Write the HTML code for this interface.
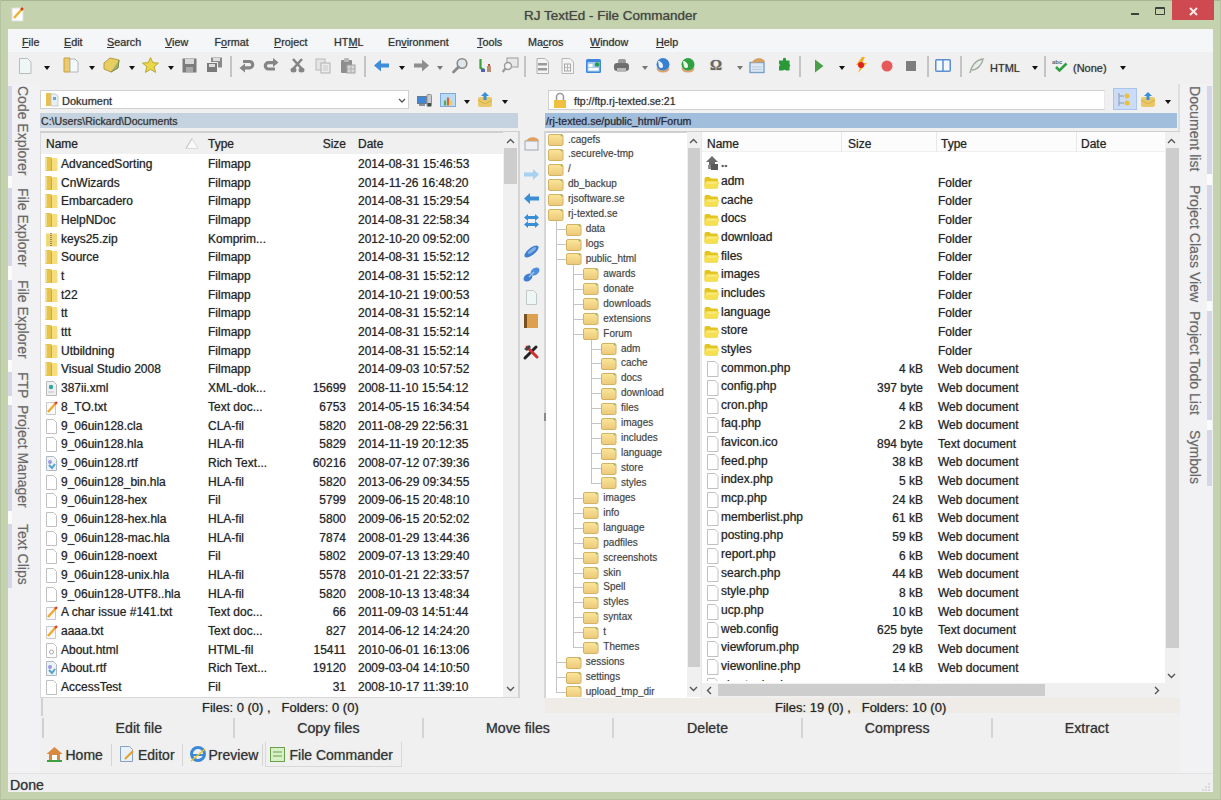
<!DOCTYPE html><html><head><meta charset="utf-8"><style>
*{margin:0;padding:0;box-sizing:border-box}
html,body{width:1221px;height:800px;overflow:hidden;background:#c4d2ad;font-family:"Liberation Sans", sans-serif;color:#262626}
.ab{position:absolute}
.t{position:absolute;white-space:nowrap;font-size:12px;line-height:14px;text-shadow:0 0 1px rgba(30,30,30,0.55)}
.s{position:absolute;white-space:nowrap;font-size:10px;line-height:12px;text-shadow:0 0 1px rgba(40,40,40,0.35)}
svg{position:absolute;overflow:visible}
.dd{position:absolute;width:0;height:0;border-left:3.5px solid transparent;border-right:3.5px solid transparent;border-top:4px solid #111}
.vt{position:absolute;white-space:nowrap;font-size:14px;line-height:14px;transform-origin:0 0;transform:rotate(90deg);color:#686868;text-shadow:0 0 1px rgba(80,80,80,0.35)}
</style></head><body><div id="root" style="position:absolute;left:0;top:0;width:1221px;height:800px">

<div class="ab" style="left:0;top:0;width:1221px;height:1px;background:#a9b794"></div>
<div class="ab" style="left:0;top:0;width:1px;height:800px;background:#b5c3a0"></div>
<div class="ab" style="left:1220px;top:0;width:1px;height:800px;background:#b5c3a0"></div>
<div class="ab" style="left:0;top:799px;width:1221px;height:1px;background:#b5c3a0"></div>
<div class="t" style="left:0;top:8px;width:1221px;text-align:center;font-size:13.5px;line-height:16px;color:#454545;padding-left:0px">RJ TextEd - File Commander</div>
<svg style="left:11px;top:6px" width="14" height="16" viewBox="0 0 14 16"><rect x="1" y="2" width="11" height="13" fill="#fff" stroke="#ddd"/><path d="M3 12 L11 3" stroke="#f0b030" stroke-width="2.5"/><path d="M10 4 L12 2" stroke="#d04020" stroke-width="2.5"/></svg>
<div class="ab" style="left:1131px;top:12.5px;width:8px;height:2px;background:#3a423a"></div>
<div class="ab" style="left:1155px;top:7px;width:10px;height:8px;border:1.5px solid #3a423a;border-top-width:2.5px;border-radius:1px"></div>
<div class="ab" style="left:1172px;top:0px;width:42px;height:20px;background:#cf4a50"></div>
<svg style="left:1189px;top:7px" width="9" height="9" viewBox="0 0 9 9"><path d="M1 1L8 8M8 1L1 8" stroke="#fbe8e8" stroke-width="2"/></svg>
<div class="ab" style="left:8px;top:29px;width:1205px;height:763px;background:#f0f0f0"></div>
<div class="ab" style="left:8px;top:29px;width:1205px;height:23px;background:#f5f6f7"></div>
<div class="t" style="left:22px;top:35px;font-size:10.8px;color:#333"><u style="text-decoration-thickness:1px;text-underline-offset:1px">F</u>ile</div>
<div class="t" style="left:64px;top:35px;font-size:10.8px;color:#333"><u style="text-decoration-thickness:1px;text-underline-offset:1px">E</u>dit</div>
<div class="t" style="left:107px;top:35px;font-size:10.8px;color:#333"><u style="text-decoration-thickness:1px;text-underline-offset:1px">S</u>earch</div>
<div class="t" style="left:165px;top:35px;font-size:10.8px;color:#333"><u style="text-decoration-thickness:1px;text-underline-offset:1px">V</u>iew</div>
<div class="t" style="left:214.5px;top:35px;font-size:10.8px;color:#333">F<u style="text-decoration-thickness:1px;text-underline-offset:1px">o</u>rmat</div>
<div class="t" style="left:274px;top:35px;font-size:10.8px;color:#333"><u style="text-decoration-thickness:1px;text-underline-offset:1px">P</u>roject</div>
<div class="t" style="left:334px;top:35px;font-size:10.8px;color:#333">HT<u style="text-decoration-thickness:1px;text-underline-offset:1px">M</u>L</div>
<div class="t" style="left:388px;top:35px;font-size:10.8px;color:#333">En<u style="text-decoration-thickness:1px;text-underline-offset:1px">v</u>ironment</div>
<div class="t" style="left:477px;top:35px;font-size:10.8px;color:#333"><u style="text-decoration-thickness:1px;text-underline-offset:1px">T</u>ools</div>
<div class="t" style="left:528px;top:35px;font-size:10.8px;color:#333">Ma<u style="text-decoration-thickness:1px;text-underline-offset:1px">c</u>ros</div>
<div class="t" style="left:590px;top:35px;font-size:10.8px;color:#333"><u style="text-decoration-thickness:1px;text-underline-offset:1px">W</u>indow</div>
<div class="t" style="left:656px;top:35px;font-size:10.8px;color:#333"><u style="text-decoration-thickness:1px;text-underline-offset:1px">H</u>elp</div>
<svg style="left:18px;top:58px" width="14" height="16" viewBox="0 0 14 16"><path d="M1.5 .5h8l3.5 3.5v11.5h-11.5z" fill="#eef6f6" stroke="#b8bcbc"/></svg>
<div class="dd" style="left:43.5px;top:66px"></div>
<svg style="left:63px;top:57px" width="16" height="16" viewBox="0 0 16 16"><path d="M1 1h6v14h-6z" fill="#eccb6a" stroke="#c9a040"/><path d="M7 2h5l3 3v10h-8z" fill="#f4fafa" stroke="#b0b8b8"/></svg>
<div class="dd" style="left:88.5px;top:66px"></div>
<svg style="left:103px;top:57px" width="17" height="16" viewBox="0 0 17 16"><path d="M1 6l6-5 9 2-1 8-7 4-7-3z" fill="#e8cd60" stroke="#b89a40"/><path d="M8 15l7-4 1-8" fill="#9cb070" stroke="#7a9050"/></svg>
<div class="dd" style="left:128.5px;top:66px"></div>
<svg style="left:142px;top:57px" width="17" height="16" viewBox="0 0 17 16"><path d="M8.5 .5l2.3 5.2 5.7.4-4.4 3.7 1.5 5.6-5.1-3-5.1 3 1.5-5.6-4.4-3.7 5.7-.4z" fill="#e8d848" stroke="#b8a830"/></svg>
<div class="dd" style="left:167.5px;top:66px"></div>
<svg style="left:182px;top:58px" width="15" height="15" viewBox="0 0 15 15"><path d="M.5 .5h14v14h-14z" fill="#7c7c7c"/><rect x="3" y="1" width="9" height="5" fill="#d8d8d8"/><rect x="4" y="9" width="7" height="5" fill="#a8a8a8"/></svg>
<svg style="left:206px;top:57px" width="17" height="16" viewBox="0 0 17 16"><path d="M5 .5h11v10h-11z" fill="#8a8a8a"/><rect x="7" y="1" width="7" height="3" fill="#ddd"/><path d="M.5 5.5h11v10h-11z" fill="#7a7a7a" stroke="#eee"/><rect x="3" y="7" width="6" height="3" fill="#ddd"/></svg>
<div class="ab" style="left:230px;top:56px;width:1.5px;height:21px;background:#c4c4c4"></div>
<svg style="left:239px;top:58px" width="16" height="15" viewBox="0 0 16 15"><path d="M4 3.5h6.5a3.2 3.2 0 0 1 0 6.4h-5" fill="none" stroke="#858585" stroke-width="3.2"/><path d="M0.5 10l5.5-4.5v9z" fill="#858585"/></svg>
<svg style="left:263px;top:58px" width="16" height="15" viewBox="0 0 16 15"><path d="M12 11h-6.5a3.2 3.2 0 0 1 0-6.4h5" fill="none" stroke="#858585" stroke-width="3.2"/><path d="M15.5 4.6l-5.5-4.5v9z" fill="#858585"/></svg>
<svg style="left:290px;top:58px" width="15" height="15" viewBox="0 0 15 15"><path d="M3 1l9 10M12 1l-9 10" stroke="#858585" stroke-width="2.6"/><ellipse cx="3.5" cy="12" rx="3" ry="2.5" fill="#858585"/><ellipse cx="11.5" cy="12" rx="3" ry="2.5" fill="#858585"/></svg>
<svg style="left:315px;top:58px" width="16" height="16" viewBox="0 0 16 16"><rect x="1" y="1" width="9" height="11" fill="#e4e4e4" stroke="#b8b8b8"/><rect x="6" y="5" width="9" height="10" fill="#ececec" stroke="#b0b0b0"/><path d="M8 8h5M8 10h5M8 12h5" stroke="#c8c8c8"/></svg>
<svg style="left:340px;top:57px" width="16" height="17" viewBox="0 0 16 17"><rect x="1" y="3" width="11" height="13" rx="1" fill="#8e8e8e"/><rect x="4" y="1" width="5" height="4" rx="1" fill="#b8b8b8"/><rect x="7" y="8" width="8" height="8" fill="#d8d8d8" stroke="#a0a0a0"/><path d="M11 8v8M7 12h8" stroke="#b0b0b0"/></svg>
<div class="ab" style="left:364px;top:56px;width:1.5px;height:21px;background:#c4c4c4"></div>
<svg style="left:374px;top:59px" width="16" height="13" viewBox="0 0 16 13"><path d="M0 6.5l7-6v4h8v4h-8v4z" fill="#3c8ed8"/></svg>
<div class="dd" style="left:398.5px;top:66px"></div>
<svg style="left:413px;top:59px" width="16" height="13" viewBox="0 0 16 13"><path d="M16 6.5l-7-6v4h-8v4h8v4z" fill="#8e8e8e"/></svg>
<div class="dd" style="left:436.5px;top:66px;border-top-color:#777"></div>
<svg style="left:452px;top:57px" width="16" height="16" viewBox="0 0 16 16"><circle cx="10" cy="6.5" r="4.8" fill="#dfe6ee" stroke="#8a8a8a" stroke-width="1.6"/><path d="M6.5 10l-5 5" stroke="#8a8a8a" stroke-width="2.8" stroke-linecap="round"/></svg>
<svg style="left:478px;top:58px" width="15" height="16" viewBox="0 0 15 16"><path d="M2.5 1v9l4 2" stroke="#3aa040" stroke-width="2.2" fill="none"/><path d="M9 8h4v6h-4z" fill="#b89070"/><rect x="10" y="6" width="2" height="2" fill="#c05030"/><rect x="3" y="11" width="4" height="3" fill="#5060c0"/></svg>
<svg style="left:502px;top:57px" width="16" height="16" viewBox="0 0 16 16"><rect x="5" y="1" width="11" height="9" fill="#e8e8e8" stroke="#9a9a9a"/><circle cx="6" cy="9" r="3.5" fill="#f4f4f4" stroke="#9a9a9a" stroke-width="1.4"/><path d="M3.5 11.5l-3 3.5" stroke="#9a9a9a" stroke-width="2.2"/></svg>
<div class="ab" style="left:524px;top:56px;width:1.5px;height:21px;background:#c4c4c4"></div>
<svg style="left:536px;top:58px" width="13" height="16" viewBox="0 0 13 16"><path d="M1 .5h8l3.5 3.5v11.5h-11.5z" fill="#f4f4f4" stroke="#b0b0b0"/><rect x="2" y="5" width="9" height="2.5" fill="#9a9a9a"/><rect x="2" y="10" width="9" height="2.5" fill="#9a9a9a"/></svg>
<svg style="left:561px;top:58px" width="13" height="16" viewBox="0 0 13 16"><path d="M1 .5h8l3.5 3.5v11.5h-11.5z" fill="#f4f4f4" stroke="#b8b8b8"/><rect x="3.5" y="6" width="6" height="7" fill="none" stroke="#a8a8a8"/><path d="M6.5 6v7M3.5 9.5h6" stroke="#b8b8b8"/></svg>
<svg style="left:586px;top:59px" width="15" height="14" viewBox="0 0 15 14"><rect x="0" y="0" width="15" height="14" rx="1.5" fill="#3f86dc"/><rect x="1.5" y="3" width="12" height="9.5" fill="#a8ccf0"/><rect x="2.5" y="5" width="4" height="3" fill="#fff"/><rect x="2.5" y="9" width="10" height="2.5" fill="#fff"/><circle cx="11" cy="5.5" r="2.2" fill="#20a040"/></svg>
<svg style="left:613px;top:58px" width="17" height="15" viewBox="0 0 17 15"><rect x="5" y="1" width="8" height="5" rx="2" fill="#9a9a9a"/><rect x="1" y="5" width="15" height="8" rx="3" fill="#6e6e6e"/><rect x="4" y="10" width="9" height="4" fill="#b8b8b8"/></svg>
<div class="dd" style="left:641.5px;top:66px;border-top-color:#777"></div>
<svg style="left:655px;top:57px" width="16" height="16" viewBox="0 0 16 16"><circle cx="8" cy="7.5" r="6.5" fill="#3a80d0"/><path d="M3 4c2 0 5 2 5 5s-3 2-4 1" fill="#e8f2fc"/><path d="M1.5 10.5q6.5 6 13 0q0 5-6.5 5t-6.5-5z" fill="#d8a470"/></svg>
<svg style="left:680px;top:57px" width="16" height="16" viewBox="0 0 16 16"><circle cx="8" cy="7.5" r="6.5" fill="#30a040"/><path d="M3 4c2 0 5 2 5 5s-3 2-4 1" fill="#e8fce8"/><path d="M1.5 10.5q6.5 6 13 0q0 5-6.5 5t-6.5-5z" fill="#d8a470"/></svg>
<div class="t" style="left:710px;top:57px;font-family:&quot;Liberation Serif&quot;,serif;font-weight:bold;font-size:15px;line-height:16px;color:#666">&#937;</div>
<div class="dd" style="left:736.5px;top:66px;border-top-color:#777"></div>
<svg style="left:749px;top:57px" width="17" height="16" viewBox="0 0 17 16"><rect x="1" y="5.5" width="14" height="10" fill="#dde8f4" stroke="#7aa0c8" stroke-width="1.4"/><path d="M3 6c1-5 9-6 12-3l1 2z" fill="#d8a060"/><path d="M3 10h10M3 12.5h10" stroke="#b8cce0"/></svg>
<svg style="left:776px;top:57px" width="16" height="16" viewBox="0 0 16 16"><path d="M7 1.5a2 2 0 0 1 3 0v2h3.5v3.5a2 2 0 0 1 0 3v3.5h-3.5a2 2 0 0 0-3 0h-4v-4a2 2 0 0 0 0-3v-3h4z" fill="#2a9a38"/></svg>
<div class="ab" style="left:799px;top:56px;width:1.5px;height:21px;background:#c4c4c4"></div>
<svg style="left:815px;top:59px" width="9" height="14" viewBox="0 0 9 14"><path d="M0 0.5v13l8.5-6.5z" fill="#4aa048"/></svg>
<div class="dd" style="left:838.5px;top:66px"></div>
<svg style="left:853px;top:57px" width="16" height="16" viewBox="0 0 16 16"><path d="M9 0l-6 8h5l-3 8 9-10h-5l3-6z" fill="#f0b020"/><circle cx="8" cy="8" r="3" fill="#e02020"/></svg>
<svg style="left:881px;top:60px" width="12" height="12" viewBox="0 0 12 12"><circle cx="6" cy="6" r="5.5" fill="#e65a5a"/></svg>
<svg style="left:906px;top:61px" width="10" height="10" viewBox="0 0 10 10"><rect width="10" height="10" fill="#7e7e7e"/></svg>
<div class="ab" style="left:927px;top:56px;width:1.5px;height:21px;background:#c4c4c4"></div>
<svg style="left:935px;top:59px" width="16" height="13" viewBox="0 0 16 13"><rect x=".75" y=".75" width="14.5" height="11.5" rx="1" fill="#f4f8fc" stroke="#5a90d0" stroke-width="1.5"/><path d="M8 1v11" stroke="#5a90d0" stroke-width="1.5"/></svg>
<div class="ab" style="left:960px;top:56px;width:1.5px;height:21px;background:#c4c4c4"></div>
<svg style="left:968px;top:58px" width="16" height="16" viewBox="0 0 16 16"><path d="M2 15c1-6 5-13 13-14-1 6-6 11-11 11" fill="#e8eee8" stroke="#a0aaa0" stroke-width="1.5"/></svg>
<div class="t" style="left:990px;top:61px;font-size:11px;color:#333">HTML</div>
<div class="dd" style="left:1031.5px;top:66px"></div>
<div class="ab" style="left:1044px;top:56px;width:1.5px;height:21px;background:#c4c4c4"></div>
<svg style="left:1052px;top:57px" width="16" height="16" viewBox="0 0 16 16"><path d="M4 10l3.5 3.5 7-7" stroke="#30a040" stroke-width="2.5" fill="none"/><text x="0" y="6.5" font-size="6" font-weight="bold" fill="#666" font-family="Liberation Sans">abc</text></svg>
<div class="t" style="left:1073px;top:61px;font-size:11px;color:#333">(None)</div>
<div class="dd" style="left:1119.5px;top:66px"></div>
<div class="ab" style="left:1180px;top:84px;width:33px;height:689px;background:#f2f2f4"></div>
<div class="ab" style="left:8px;top:84px;width:32px;height:689px;background:#f2f2f4"></div>
<div class="ab" style="left:8px;top:86px;width:4px;height:90px;background:#d5d7e7"></div>
<div class="vt" style="left:30px;top:86px">Code Explorer</div>
<div class="ab" style="left:8px;top:188px;width:4px;height:78px;background:#d5d7e7"></div>
<div class="vt" style="left:30px;top:188px">File Explorer</div>
<div class="ab" style="left:8px;top:280px;width:4px;height:80px;background:#d5d7e7"></div>
<div class="vt" style="left:30px;top:280px">File Explorer</div>
<div class="ab" style="left:8px;top:372px;width:4px;height:24px;background:#d5d7e7"></div>
<div class="vt" style="left:30px;top:372px">FTP</div>
<div class="ab" style="left:8px;top:405px;width:4px;height:106px;background:#d5d7e7"></div>
<div class="vt" style="left:30px;top:405px">Project Manager</div>
<div class="ab" style="left:8px;top:524px;width:4px;height:64px;background:#d5d7e7"></div>
<div class="vt" style="left:30px;top:524px">Text Clips</div>
<div class="ab" style="left:8px;top:176px;width:4px;height:12px;background:#fbfbfb"></div>
<div class="ab" style="left:8px;top:266px;width:4px;height:14px;background:#fbfbfb"></div>
<div class="ab" style="left:8px;top:360px;width:4px;height:12px;background:#fbfbfb"></div>
<div class="ab" style="left:8px;top:396px;width:4px;height:9px;background:#fbfbfb"></div>
<div class="ab" style="left:8px;top:511px;width:4px;height:13px;background:#fbfbfb"></div>
<div class="ab" style="left:1207px;top:86px;width:5px;height:88px;background:#d5d7e7"></div>
<div class="vt" style="left:1202px;top:86px;font-size:14.1px">Document list</div>
<div class="ab" style="left:1207px;top:185px;width:5px;height:116px;background:#d5d7e7"></div>
<div class="vt" style="left:1202px;top:185px;font-size:14.1px">Project Class View</div>
<div class="ab" style="left:1207px;top:311px;width:5px;height:109px;background:#d5d7e7"></div>
<div class="vt" style="left:1202px;top:311px;font-size:14.1px">Project Todo List</div>
<div class="ab" style="left:1207px;top:430px;width:5px;height:56px;background:#d5d7e7"></div>
<div class="vt" style="left:1202px;top:430px;font-size:14.1px">Symbols</div>
<div class="ab" style="left:1207px;top:174px;width:5px;height:11px;background:#fbfbfb"></div>
<div class="ab" style="left:1207px;top:301px;width:5px;height:10px;background:#fbfbfb"></div>
<div class="ab" style="left:1207px;top:420px;width:5px;height:10px;background:#fbfbfb"></div>
<div class="ab" style="left:40px;top:90px;width:369px;height:19px;background:#fff;border:1px solid #d0d0d0"></div>
<svg style="left:45px;top:92px" width="13" height="15" viewBox="0 0 13 15"><path d="M1 1h5v13h-5z" fill="#e8c050"/><path d="M6 2h5l2 2v10h-7z" fill="#e8f0f4" stroke="#b8c0c8" stroke-width=".8"/><rect x="8" y="5" width="3" height="3" fill="#60a8e0"/></svg>
<div class="t" style="left:62px;top:94px;font-size:11px;color:#333">Dokument</div>
<svg style="left:398px;top:98px" width="8" height="5" viewBox="0 0 8 5"><path d="M1 1l3 3 3-3" stroke="#555" stroke-width="1.3" fill="none"/></svg>
<svg style="left:417px;top:94px" width="15" height="13" viewBox="0 0 15 13"><rect x="0.5" y="2.5" width="9" height="7" fill="#3f88d8" stroke="#6a7a8a"/><rect x="10" y="0.5" width="4.5" height="12" rx="1" fill="#c8ccd0" stroke="#8a9098"/><rect x="2" y="10" width="6" height="2" fill="#8a9098"/><rect x="10.5" y="9" width="3.5" height="3" fill="#405040"/></svg>
<svg style="left:440px;top:93px" width="16" height="14" viewBox="0 0 16 14"><rect x=".5" y=".5" width="15" height="13" fill="#b8dcf4" stroke="#80a8d8"/><path d="M5 12.5v-5" stroke="#50b050" stroke-width="2.2"/><path d="M8 12.5v-8" stroke="#e06040" stroke-width="2.2"/><path d="M11 12.5v-5" stroke="#f0d050" stroke-width="2.2"/></svg>
<div class="dd" style="left:463.5px;top:100px"></div>
<svg style="left:477px;top:92px" width="16" height="15" viewBox="0 0 16 15"><path d="M1 7q0-2 2-2h10q2 0 2 2v6q0 2-2 2h-10q-2 0-2-2z" fill="#e8c868"/><path d="M1 8l7 4 7-4" fill="none" stroke="#d0a840" stroke-width=".8"/><path d="M8 0l-4 4h2.5v4h3v-4h2.5z" fill="#3a90d8"/></svg>
<div class="dd" style="left:501.5px;top:100px"></div>
<div class="ab" style="left:40px;top:113px;width:478px;height:15px;background:#c5d3e1"></div>
<div class="t" style="left:41px;top:114.5px;font-size:10.6px;line-height:13px;color:#333">C:\Users\Rickard\Documents</div>
<div class="ab" style="left:40px;top:131px;width:480px;height:567px;background:#fff;border:1px solid #d8d8d8;border-top:2px solid #cfcfcf;border-right:2px solid #d4d4d4"></div>
<div class="ab" style="left:41px;top:133px;width:462px;height:21px;background:#f0f0f0"></div>
<svg style="left:185px;top:138px" width="14" height="11" viewBox="0 0 14 11"><path d="M1 10.5l6-10 6 10z" fill="#fafafa" stroke="#dadada"/><path d="M1 10.5l6-10" stroke="#c4c4c4"/></svg>
<div class="t" style="left:46px;top:137px">Name</div>
<div class="t" style="left:208px;top:137px">Type</div>
<div class="t" style="left:358px;top:137px">Date</div>
<div class="t" style="left:286px;top:137px;width:60px;text-align:right">Size</div>
<div class="ab" style="left:503px;top:132px;width:15px;height:565px;background:#f0f0f0"></div>
<div class="ab" style="left:504px;top:148px;width:13px;height:36px;background:#cdcdcd"></div>
<svg style="left:506px;top:138px" width="9" height="6" viewBox="0 0 9 6"><path d="M1 5l3.5-3.5 3.5 3.5" stroke="#555" stroke-width="1.4" fill="none"/></svg>
<svg style="left:506px;top:686px" width="9" height="6" viewBox="0 0 9 6"><path d="M1 1l3.5 3.5 3.5-3.5" stroke="#555" stroke-width="1.4" fill="none"/></svg>
<svg style="left:45px;top:156px" width="13" height="16" viewBox="0 0 13 16"><path d="M0.5 1h5.5l1 1v13h-6.5z" fill="#e6c24e"/><path d="M6 2h5.5l1 1v12h-6.5z" fill="#f6de7c"/><path d="M6.5 2.5v12.5" stroke="#d4a834" stroke-width="1"/><path d="M1.5 2v12" stroke="#f4e090" stroke-width="1"/></svg>
<div class="t" style="left:61px;top:157.00px">AdvancedSorting</div>
<div class="t" style="left:208px;top:157.00px">Filmapp</div>
<div class="t" style="left:358px;top:157.00px">2014-08-31 15:46:53</div>
<svg style="left:45px;top:175px" width="13" height="16" viewBox="0 0 13 16"><path d="M0.5 1h5.5l1 1v13h-6.5z" fill="#e6c24e"/><path d="M6 2h5.5l1 1v12h-6.5z" fill="#f6de7c"/><path d="M6.5 2.5v12.5" stroke="#d4a834" stroke-width="1"/><path d="M1.5 2v12" stroke="#f4e090" stroke-width="1"/></svg>
<div class="t" style="left:61px;top:175.68px">CnWizards</div>
<div class="t" style="left:208px;top:175.68px">Filmapp</div>
<div class="t" style="left:358px;top:175.68px">2014-11-26 16:48:20</div>
<svg style="left:45px;top:193px" width="13" height="16" viewBox="0 0 13 16"><path d="M0.5 1h5.5l1 1v13h-6.5z" fill="#e6c24e"/><path d="M6 2h5.5l1 1v12h-6.5z" fill="#f6de7c"/><path d="M6.5 2.5v12.5" stroke="#d4a834" stroke-width="1"/><path d="M1.5 2v12" stroke="#f4e090" stroke-width="1"/></svg>
<div class="t" style="left:61px;top:194.36px">Embarcadero</div>
<div class="t" style="left:208px;top:194.36px">Filmapp</div>
<div class="t" style="left:358px;top:194.36px">2014-08-31 15:29:54</div>
<svg style="left:45px;top:212px" width="13" height="16" viewBox="0 0 13 16"><path d="M0.5 1h5.5l1 1v13h-6.5z" fill="#e6c24e"/><path d="M6 2h5.5l1 1v12h-6.5z" fill="#f6de7c"/><path d="M6.5 2.5v12.5" stroke="#d4a834" stroke-width="1"/><path d="M1.5 2v12" stroke="#f4e090" stroke-width="1"/></svg>
<div class="t" style="left:61px;top:213.04px">HelpNDoc</div>
<div class="t" style="left:208px;top:213.04px">Filmapp</div>
<div class="t" style="left:358px;top:213.04px">2014-08-31 22:58:34</div>
<svg style="left:45px;top:232px" width="13" height="15" viewBox="0 0 13 15"><path d="M1 1.5h11v13h-11z" fill="#f0d878"/><path d="M6 1v14" stroke="#555" stroke-width="1.2" stroke-dasharray="1 1"/></svg>
<div class="t" style="left:61px;top:231.72px">keys25.zip</div>
<div class="t" style="left:208px;top:231.72px">Komprim...</div>
<div class="t" style="left:358px;top:231.72px">2012-10-20 09:52:00</div>
<svg style="left:45px;top:249px" width="13" height="16" viewBox="0 0 13 16"><path d="M0.5 1h5.5l1 1v13h-6.5z" fill="#e6c24e"/><path d="M6 2h5.5l1 1v12h-6.5z" fill="#f6de7c"/><path d="M6.5 2.5v12.5" stroke="#d4a834" stroke-width="1"/><path d="M1.5 2v12" stroke="#f4e090" stroke-width="1"/></svg>
<div class="t" style="left:61px;top:250.40px">Source</div>
<div class="t" style="left:208px;top:250.40px">Filmapp</div>
<div class="t" style="left:358px;top:250.40px">2014-08-31 15:52:12</div>
<svg style="left:45px;top:268px" width="13" height="16" viewBox="0 0 13 16"><path d="M0.5 1h5.5l1 1v13h-6.5z" fill="#e6c24e"/><path d="M6 2h5.5l1 1v12h-6.5z" fill="#f6de7c"/><path d="M6.5 2.5v12.5" stroke="#d4a834" stroke-width="1"/><path d="M1.5 2v12" stroke="#f4e090" stroke-width="1"/></svg>
<div class="t" style="left:61px;top:269.08px">t</div>
<div class="t" style="left:208px;top:269.08px">Filmapp</div>
<div class="t" style="left:358px;top:269.08px">2014-08-31 15:52:12</div>
<svg style="left:45px;top:287px" width="13" height="16" viewBox="0 0 13 16"><path d="M0.5 1h5.5l1 1v13h-6.5z" fill="#e6c24e"/><path d="M6 2h5.5l1 1v12h-6.5z" fill="#f6de7c"/><path d="M6.5 2.5v12.5" stroke="#d4a834" stroke-width="1"/><path d="M1.5 2v12" stroke="#f4e090" stroke-width="1"/></svg>
<div class="t" style="left:61px;top:287.76px">t22</div>
<div class="t" style="left:208px;top:287.76px">Filmapp</div>
<div class="t" style="left:358px;top:287.76px">2014-10-21 19:00:53</div>
<svg style="left:45px;top:305px" width="13" height="16" viewBox="0 0 13 16"><path d="M0.5 1h5.5l1 1v13h-6.5z" fill="#e6c24e"/><path d="M6 2h5.5l1 1v12h-6.5z" fill="#f6de7c"/><path d="M6.5 2.5v12.5" stroke="#d4a834" stroke-width="1"/><path d="M1.5 2v12" stroke="#f4e090" stroke-width="1"/></svg>
<div class="t" style="left:61px;top:306.44px">tt</div>
<div class="t" style="left:208px;top:306.44px">Filmapp</div>
<div class="t" style="left:358px;top:306.44px">2014-08-31 15:52:14</div>
<svg style="left:45px;top:324px" width="13" height="16" viewBox="0 0 13 16"><path d="M0.5 1h5.5l1 1v13h-6.5z" fill="#e6c24e"/><path d="M6 2h5.5l1 1v12h-6.5z" fill="#f6de7c"/><path d="M6.5 2.5v12.5" stroke="#d4a834" stroke-width="1"/><path d="M1.5 2v12" stroke="#f4e090" stroke-width="1"/></svg>
<div class="t" style="left:61px;top:325.12px">ttt</div>
<div class="t" style="left:208px;top:325.12px">Filmapp</div>
<div class="t" style="left:358px;top:325.12px">2014-08-31 15:52:14</div>
<svg style="left:45px;top:343px" width="13" height="16" viewBox="0 0 13 16"><path d="M0.5 1h5.5l1 1v13h-6.5z" fill="#e6c24e"/><path d="M6 2h5.5l1 1v12h-6.5z" fill="#f6de7c"/><path d="M6.5 2.5v12.5" stroke="#d4a834" stroke-width="1"/><path d="M1.5 2v12" stroke="#f4e090" stroke-width="1"/></svg>
<div class="t" style="left:61px;top:343.80px">Utbildning</div>
<div class="t" style="left:208px;top:343.80px">Filmapp</div>
<div class="t" style="left:358px;top:343.80px">2014-08-31 15:52:14</div>
<svg style="left:45px;top:361px" width="13" height="16" viewBox="0 0 13 16"><path d="M0.5 1h5.5l1 1v13h-6.5z" fill="#e6c24e"/><path d="M6 2h5.5l1 1v12h-6.5z" fill="#f6de7c"/><path d="M6.5 2.5v12.5" stroke="#d4a834" stroke-width="1"/><path d="M1.5 2v12" stroke="#f4e090" stroke-width="1"/></svg>
<div class="t" style="left:61px;top:362.48px">Visual Studio 2008</div>
<div class="t" style="left:208px;top:362.48px">Filmapp</div>
<div class="t" style="left:358px;top:362.48px">2014-09-03 10:57:52</div>
<svg style="left:45px;top:381px" width="13" height="15" viewBox="0 0 13 15"><path d="M1.5 .5h7l3 3v11h-10z" fill="#f0f0f0" stroke="#b8b8b8"/><circle cx="6" cy="6" r="2.2" fill="#30a8a0"/><path d="M3 11h6" stroke="#c0c0d0"/></svg>
<div class="t" style="left:61px;top:381.16px">387ii.xml</div>
<div class="t" style="left:208px;top:381.16px">XML-dok...</div>
<div class="t" style="left:286px;top:381.16px;width:60px;text-align:right">15699</div>
<div class="t" style="left:358px;top:381.16px">2008-11-10 15:54:12</div>
<svg style="left:45px;top:400px" width="13" height="15" viewBox="0 0 13 15"><path d="M1.5 2.5h9v12h-9z" fill="#fafafa" stroke="#c8c8c8"/><path d="M3 12l8-9" stroke="#f0a830" stroke-width="2.4"/><path d="M10 4l2-2" stroke="#e04030" stroke-width="2.4"/></svg>
<div class="t" style="left:61px;top:399.84px">8_TO.txt</div>
<div class="t" style="left:208px;top:399.84px">Text doc...</div>
<div class="t" style="left:286px;top:399.84px;width:60px;text-align:right">6753</div>
<div class="t" style="left:358px;top:399.84px">2014-05-15 16:34:54</div>
<svg style="left:45px;top:419px" width="13" height="15" viewBox="0 0 13 15"><path d="M1.5 .5h7l3 3v11h-10z" fill="#fff" stroke="#c0c0c0"/></svg>
<div class="t" style="left:61px;top:418.52px">9_06uin128.cla</div>
<div class="t" style="left:208px;top:418.52px">CLA-fil</div>
<div class="t" style="left:286px;top:418.52px;width:60px;text-align:right">5820</div>
<div class="t" style="left:358px;top:418.52px">2011-08-29 22:56:31</div>
<svg style="left:45px;top:437px" width="13" height="15" viewBox="0 0 13 15"><path d="M1.5 .5h7l3 3v11h-10z" fill="#fff" stroke="#c0c0c0"/></svg>
<div class="t" style="left:61px;top:437.20px">9_06uin128.hla</div>
<div class="t" style="left:208px;top:437.20px">HLA-fil</div>
<div class="t" style="left:286px;top:437.20px;width:60px;text-align:right">5829</div>
<div class="t" style="left:358px;top:437.20px">2014-11-19 20:12:35</div>
<svg style="left:45px;top:456px" width="13" height="15" viewBox="0 0 13 15"><path d="M1.5 .5h7l3 3v11h-10z" fill="#eef2f6" stroke="#b0b8c0"/><circle cx="5" cy="6" r="2" fill="#9a9ae0"/><path d="M4 9l3 3 3-4" stroke="#50a0d0" stroke-width="2" fill="none"/></svg>
<div class="t" style="left:61px;top:455.88px">9_06uin128.rtf</div>
<div class="t" style="left:208px;top:455.88px">Rich Text...</div>
<div class="t" style="left:286px;top:455.88px;width:60px;text-align:right">60216</div>
<div class="t" style="left:358px;top:455.88px">2008-07-12 07:39:36</div>
<svg style="left:45px;top:475px" width="13" height="15" viewBox="0 0 13 15"><path d="M1.5 .5h7l3 3v11h-10z" fill="#fff" stroke="#c0c0c0"/></svg>
<div class="t" style="left:61px;top:474.56px">9_06uin128_bin.hla</div>
<div class="t" style="left:208px;top:474.56px">HLA-fil</div>
<div class="t" style="left:286px;top:474.56px;width:60px;text-align:right">5820</div>
<div class="t" style="left:358px;top:474.56px">2013-06-29 09:34:55</div>
<svg style="left:45px;top:493px" width="13" height="15" viewBox="0 0 13 15"><path d="M1.5 .5h7l3 3v11h-10z" fill="#fff" stroke="#c0c0c0"/></svg>
<div class="t" style="left:61px;top:493.24px">9_06uin128-hex</div>
<div class="t" style="left:208px;top:493.24px">Fil</div>
<div class="t" style="left:286px;top:493.24px;width:60px;text-align:right">5799</div>
<div class="t" style="left:358px;top:493.24px">2009-06-15 20:48:10</div>
<svg style="left:45px;top:512px" width="13" height="15" viewBox="0 0 13 15"><path d="M1.5 .5h7l3 3v11h-10z" fill="#fff" stroke="#c0c0c0"/></svg>
<div class="t" style="left:61px;top:511.92px">9_06uin128-hex.hla</div>
<div class="t" style="left:208px;top:511.92px">HLA-fil</div>
<div class="t" style="left:286px;top:511.92px;width:60px;text-align:right">5800</div>
<div class="t" style="left:358px;top:511.92px">2009-06-15 20:52:02</div>
<svg style="left:45px;top:531px" width="13" height="15" viewBox="0 0 13 15"><path d="M1.5 .5h7l3 3v11h-10z" fill="#fff" stroke="#c0c0c0"/></svg>
<div class="t" style="left:61px;top:530.60px">9_06uin128-mac.hla</div>
<div class="t" style="left:208px;top:530.60px">HLA-fil</div>
<div class="t" style="left:286px;top:530.60px;width:60px;text-align:right">7874</div>
<div class="t" style="left:358px;top:530.60px">2008-01-29 13:44:36</div>
<svg style="left:45px;top:549px" width="13" height="15" viewBox="0 0 13 15"><path d="M1.5 .5h7l3 3v11h-10z" fill="#fff" stroke="#c0c0c0"/></svg>
<div class="t" style="left:61px;top:549.28px">9_06uin128-noext</div>
<div class="t" style="left:208px;top:549.28px">Fil</div>
<div class="t" style="left:286px;top:549.28px;width:60px;text-align:right">5802</div>
<div class="t" style="left:358px;top:549.28px">2009-07-13 13:29:40</div>
<svg style="left:45px;top:568px" width="13" height="15" viewBox="0 0 13 15"><path d="M1.5 .5h7l3 3v11h-10z" fill="#fff" stroke="#c0c0c0"/></svg>
<div class="t" style="left:61px;top:567.96px">9_06uin128-unix.hla</div>
<div class="t" style="left:208px;top:567.96px">HLA-fil</div>
<div class="t" style="left:286px;top:567.96px;width:60px;text-align:right">5578</div>
<div class="t" style="left:358px;top:567.96px">2010-01-21 22:33:57</div>
<svg style="left:45px;top:587px" width="13" height="15" viewBox="0 0 13 15"><path d="M1.5 .5h7l3 3v11h-10z" fill="#fff" stroke="#c0c0c0"/></svg>
<div class="t" style="left:61px;top:586.64px">9_06uin128-UTF8..hla</div>
<div class="t" style="left:208px;top:586.64px">HLA-fil</div>
<div class="t" style="left:286px;top:586.64px;width:60px;text-align:right">5820</div>
<div class="t" style="left:358px;top:586.64px">2008-10-13 13:48:34</div>
<svg style="left:45px;top:605px" width="13" height="15" viewBox="0 0 13 15"><path d="M1.5 2.5h9v12h-9z" fill="#fafafa" stroke="#c8c8c8"/><path d="M3 12l8-9" stroke="#f0a830" stroke-width="2.4"/><path d="M10 4l2-2" stroke="#e04030" stroke-width="2.4"/></svg>
<div class="t" style="left:61px;top:605.32px">A char issue #141.txt</div>
<div class="t" style="left:208px;top:605.32px">Text doc...</div>
<div class="t" style="left:286px;top:605.32px;width:60px;text-align:right">66</div>
<div class="t" style="left:358px;top:605.32px">2011-09-03 14:51:44</div>
<svg style="left:45px;top:624px" width="13" height="15" viewBox="0 0 13 15"><path d="M1.5 2.5h9v12h-9z" fill="#fafafa" stroke="#c8c8c8"/><path d="M3 12l8-9" stroke="#f0a830" stroke-width="2.4"/><path d="M10 4l2-2" stroke="#e04030" stroke-width="2.4"/></svg>
<div class="t" style="left:61px;top:624.00px">aaaa.txt</div>
<div class="t" style="left:208px;top:624.00px">Text doc...</div>
<div class="t" style="left:286px;top:624.00px;width:60px;text-align:right">827</div>
<div class="t" style="left:358px;top:624.00px">2014-06-12 14:24:20</div>
<svg style="left:45px;top:643px" width="13" height="15" viewBox="0 0 13 15"><path d="M1.5 .5h7l3 3v11h-10z" fill="#fff" stroke="#c0c0c0"/><circle cx="6.5" cy="9" r="2" fill="none" stroke="#a8a8a8"/></svg>
<div class="t" style="left:61px;top:642.68px">About.html</div>
<div class="t" style="left:208px;top:642.68px">HTML-fil</div>
<div class="t" style="left:286px;top:642.68px;width:60px;text-align:right">15411</div>
<div class="t" style="left:358px;top:642.68px">2010-06-01 16:13:06</div>
<svg style="left:45px;top:661px" width="13" height="15" viewBox="0 0 13 15"><path d="M1.5 .5h7l3 3v11h-10z" fill="#eef2f6" stroke="#b0b8c0"/><circle cx="5" cy="6" r="2" fill="#9a9ae0"/><path d="M4 9l3 3 3-4" stroke="#50a0d0" stroke-width="2" fill="none"/></svg>
<div class="t" style="left:61px;top:661.36px">About.rtf</div>
<div class="t" style="left:208px;top:661.36px">Rich Text...</div>
<div class="t" style="left:286px;top:661.36px;width:60px;text-align:right">19120</div>
<div class="t" style="left:358px;top:661.36px">2009-03-04 14:10:50</div>
<svg style="left:45px;top:680px" width="13" height="15" viewBox="0 0 13 15"><path d="M1.5 .5h7l3 3v11h-10z" fill="#fff" stroke="#c0c0c0"/></svg>
<div class="t" style="left:61px;top:680.04px">AccessTest</div>
<div class="t" style="left:208px;top:680.04px">Fil</div>
<div class="t" style="left:286px;top:680.04px;width:60px;text-align:right">31</div>
<div class="t" style="left:358px;top:680.04px">2008-10-17 11:39:10</div>
<div class="ab" style="left:544px;top:131px;width:2px;height:567px;background:#d6d6d6"></div>
<div class="ab" style="left:544px;top:413px;width:2px;height:8px;background:#8a8a8a"></div>
<svg style="left:524px;top:136px" width="15" height="15" viewBox="0 0 15 15"><rect x="1" y="5" width="13" height="9" fill="#eef0f4" stroke="#a0a8b0"/><path d="M2 5c2-4 8-5 12-2l1 2z" fill="#e0a060"/></svg>
<svg style="left:524px;top:169px" width="15" height="11" viewBox="0 0 15 11"><path d="M15 5.5l-6-5.5v3.5h-9v4h9v3.5z" fill="#a8d0f0"/></svg>
<svg style="left:524px;top:193px" width="15" height="11" viewBox="0 0 15 11"><path d="M0 5.5l6-5.5v3.5h9v4h-9v3.5z" fill="#3a8ed8"/></svg>
<svg style="left:524px;top:214px" width="15" height="14" viewBox="0 0 15 14"><path d="M15 3.5l-4-3.5v2h-7v-2l-4 3.5 4 3.5v-2h7v2z" fill="#3a8ed8"/><path d="M15 10.5l-4-3.5v2h-7v-2l-4 3.5 4 3.5v-2h7v2z" fill="#3a8ed8"/></svg>
<svg style="left:523px;top:244px" width="17" height="15" viewBox="0 0 17 15"><ellipse cx="8.5" cy="7.5" rx="8.5" ry="3.6" transform="rotate(-38 8.5 7.5)" fill="#3f7fcf"/><ellipse cx="9" cy="6.5" rx="5" ry="1.6" transform="rotate(-38 9 6.5)" fill="#7fb0e8"/></svg>
<svg style="left:523px;top:267px" width="17" height="15" viewBox="0 0 17 15"><ellipse cx="5" cy="10.5" rx="5" ry="3.4" transform="rotate(-38 5 10.5)" fill="#3f7fcf"/><ellipse cx="12" cy="4.5" rx="5" ry="3.4" transform="rotate(-38 12 4.5)" fill="#4f8fdf"/><path d="M6 10l5-5" stroke="#a8c8f0" stroke-width="1.2"/></svg>
<svg style="left:525px;top:290px" width="13" height="15" viewBox="0 0 13 15"><path d="M1.5 .5h7l3 3v11h-10z" fill="#eef6f6" stroke="#c0c8c8"/></svg>
<svg style="left:524px;top:313px" width="14" height="15" viewBox="0 0 14 15"><rect x="0" y="1" width="14" height="14" fill="#c08040"/><rect x="3" y="1" width="11" height="14" fill="#dca050"/><rect x="0" y="1" width="3" height="14" fill="#7a5020"/></svg>
<svg style="left:523px;top:344px" width="17" height="16" viewBox="0 0 17 16"><path d="M2 14l11-11" stroke="#222" stroke-width="3" stroke-linecap="round"/><path d="M4 3l10 10" stroke="#d03030" stroke-width="3" stroke-linecap="round"/><path d="M1 5l5-4 2 2-4 4z" fill="#444"/></svg>
<div class="ab" style="left:548px;top:90px;width:557px;height:19.5px;background:#fff;border:1px solid #d0d0d0;border-right:1px solid #e8e8e8"></div>
<div class="ab" style="left:1178px;top:84px;width:2px;height:47px;background:#dedede"></div>
<svg style="left:553px;top:93px" width="14" height="15" viewBox="0 0 14 15"><path d="M3.5 7v-3a3.5 3.5 0 0 1 7 0v3" stroke="#9a9a9a" stroke-width="1.6" fill="none"/><rect x="1" y="7" width="12" height="8" fill="#f0c040"/></svg>
<div class="t" style="left:574px;top:95px;font-size:10.5px;line-height:12px;color:#333">ftp://ftp.rj-texted.se:21</div>
<div class="ab" style="left:1113px;top:87.5px;width:24px;height:22.5px;background:#cddcf6;border:1px solid #aac4ee"></div>
<svg style="left:1117px;top:92px" width="14" height="15" viewBox="0 0 14 15"><path d="M2 1v13M2 4h5M2 11h5" stroke="#8a9ab0" fill="none"/><circle cx="10" cy="4" r="2.5" fill="#e8c040"/><circle cx="10" cy="11" r="2.5" fill="#e8c040"/></svg>
<svg style="left:1140px;top:92px" width="16" height="15" viewBox="0 0 16 15"><path d="M1 7q0-2 2-2h10q2 0 2 2v6q0 2-2 2h-10q-2 0-2-2z" fill="#e8c868"/><path d="M1 8l7 4 7-4" fill="none" stroke="#d0a840" stroke-width=".8"/><path d="M8 0l-4 4h2.5v4h3v-4h2.5z" fill="#3a90d8"/></svg>
<div class="dd" style="left:1164.5px;top:100px"></div>
<div class="ab" style="left:545px;top:113px;width:632px;height:15px;background:#a2bedd"></div>
<div class="t" style="left:546px;top:114.5px;font-size:10.6px;line-height:13px;color:#2a2a3a">/rj-texted.se/public_html/Forum</div>
<div class="ab" style="left:546px;top:131px;width:155px;height:567px;background:#fff;border-top:2px solid #cfcfcf"></div>
<div class="ab" style="left:687px;top:132px;width:14px;height:565px;background:#f0f0f0"></div>
<div class="ab" style="left:688px;top:148px;width:12px;height:519px;background:#cdcdcd"></div>
<svg style="left:689px;top:138px" width="9" height="6" viewBox="0 0 9 6"><path d="M1 5l3.5-3.5 3.5 3.5" stroke="#555" stroke-width="1.4" fill="none"/></svg>
<svg style="left:689px;top:686px" width="9" height="6" viewBox="0 0 9 6"><path d="M1 1l3.5 3.5 3.5-3.5" stroke="#555" stroke-width="1.4" fill="none"/></svg>
<svg width="0" height="0" style="position:absolute"><defs><linearGradient id="tg" x1="0" y1="0" x2="0" y2="1"><stop offset="0" stop-color="#fbe69a"/><stop offset="1" stop-color="#ecc878"/></linearGradient></defs></svg>
<div style="position:absolute;left:546px;top:132px;width:141px;height:565px;overflow:hidden">
<div class="ab" style="left:9.5px;top:88.7px;width:1px;height:471.8px;background:#c4c4c4"></div>
<div class="ab" style="left:27.2px;top:133.4px;width:1px;height:382.2px;background:#c4c4c4"></div>
<div class="ab" style="left:44.8px;top:208.1px;width:1px;height:143.3px;background:#c4c4c4"></div>
<svg style="left:2.0px;top:2.0px" width="16" height="12" viewBox="0 0 16 12"><rect x=".5" y=".5" width="14.5" height="11" rx="1.5" fill="url(#tg)" stroke="#d2b264"/><path d="M12 .8h2.2v2.2z" fill="#7ab070"/></svg>
<div class="s" style="left:22.0px;top:1.5px;color:#444">.cagefs</div>
<svg style="left:2.0px;top:16.9px" width="16" height="12" viewBox="0 0 16 12"><rect x=".5" y=".5" width="14.5" height="11" rx="1.5" fill="url(#tg)" stroke="#d2b264"/><path d="M12 .8h2.2v2.2z" fill="#7ab070"/></svg>
<div class="s" style="left:22.0px;top:16.4px;color:#444">.securelve-tmp</div>
<svg style="left:2.0px;top:31.9px" width="16" height="12" viewBox="0 0 16 12"><rect x=".5" y=".5" width="14.5" height="11" rx="1.5" fill="url(#tg)" stroke="#d2b264"/><path d="M12 .8h2.2v2.2z" fill="#7ab070"/></svg>
<div class="s" style="left:22.0px;top:31.4px;color:#444">/</div>
<svg style="left:2.0px;top:46.8px" width="16" height="12" viewBox="0 0 16 12"><rect x=".5" y=".5" width="14.5" height="11" rx="1.5" fill="url(#tg)" stroke="#d2b264"/><path d="M12 .8h2.2v2.2z" fill="#7ab070"/></svg>
<div class="s" style="left:22.0px;top:46.3px;color:#444">db_backup</div>
<svg style="left:2.0px;top:61.7px" width="16" height="12" viewBox="0 0 16 12"><rect x=".5" y=".5" width="14.5" height="11" rx="1.5" fill="url(#tg)" stroke="#d2b264"/><path d="M12 .8h2.2v2.2z" fill="#7ab070"/></svg>
<div class="s" style="left:22.0px;top:61.2px;color:#444">rjsoftware.se</div>
<svg style="left:2.0px;top:76.7px" width="16" height="12" viewBox="0 0 16 12"><rect x=".5" y=".5" width="14.5" height="11" rx="1.5" fill="url(#tg)" stroke="#d2b264"/><path d="M12 .8h2.2v2.2z" fill="#7ab070"/></svg>
<div class="s" style="left:22.0px;top:76.2px;color:#444">rj-texted.se</div>
<div class="ab" style="left:9.5px;top:97.1px;width:10.2px;height:1px;background:#c4c4c4"></div>
<svg style="left:19.7px;top:91.6px" width="16" height="12" viewBox="0 0 16 12"><rect x=".5" y=".5" width="14.5" height="11" rx="1.5" fill="url(#tg)" stroke="#d2b264"/><path d="M12 .8h2.2v2.2z" fill="#7ab070"/></svg>
<div class="s" style="left:39.7px;top:91.1px;color:#444">data</div>
<div class="ab" style="left:9.5px;top:112.0px;width:10.2px;height:1px;background:#c4c4c4"></div>
<svg style="left:19.7px;top:106.5px" width="16" height="12" viewBox="0 0 16 12"><rect x=".5" y=".5" width="14.5" height="11" rx="1.5" fill="url(#tg)" stroke="#d2b264"/><path d="M12 .8h2.2v2.2z" fill="#7ab070"/></svg>
<div class="s" style="left:39.7px;top:106.0px;color:#444">logs</div>
<div class="ab" style="left:9.5px;top:126.9px;width:10.2px;height:1px;background:#c4c4c4"></div>
<svg style="left:19.7px;top:121.4px" width="16" height="12" viewBox="0 0 16 12"><rect x=".5" y=".5" width="14.5" height="11" rx="1.5" fill="url(#tg)" stroke="#d2b264"/><path d="M12 .8h2.2v2.2z" fill="#7ab070"/></svg>
<div class="s" style="left:39.7px;top:120.9px;color:#444">public_html</div>
<div class="ab" style="left:27.2px;top:141.9px;width:10.2px;height:1px;background:#c4c4c4"></div>
<svg style="left:37.3px;top:136.4px" width="16" height="12" viewBox="0 0 16 12"><rect x=".5" y=".5" width="14.5" height="11" rx="1.5" fill="url(#tg)" stroke="#d2b264"/><path d="M12 .8h2.2v2.2z" fill="#7ab070"/></svg>
<div class="s" style="left:57.3px;top:135.9px;color:#444">awards</div>
<div class="ab" style="left:27.2px;top:156.8px;width:10.2px;height:1px;background:#c4c4c4"></div>
<svg style="left:37.3px;top:151.3px" width="16" height="12" viewBox="0 0 16 12"><rect x=".5" y=".5" width="14.5" height="11" rx="1.5" fill="url(#tg)" stroke="#d2b264"/><path d="M12 .8h2.2v2.2z" fill="#7ab070"/></svg>
<div class="s" style="left:57.3px;top:150.8px;color:#444">donate</div>
<div class="ab" style="left:27.2px;top:171.7px;width:10.2px;height:1px;background:#c4c4c4"></div>
<svg style="left:37.3px;top:166.2px" width="16" height="12" viewBox="0 0 16 12"><rect x=".5" y=".5" width="14.5" height="11" rx="1.5" fill="url(#tg)" stroke="#d2b264"/><path d="M12 .8h2.2v2.2z" fill="#7ab070"/></svg>
<div class="s" style="left:57.3px;top:165.7px;color:#444">downloads</div>
<div class="ab" style="left:27.2px;top:186.7px;width:10.2px;height:1px;background:#c4c4c4"></div>
<svg style="left:37.3px;top:181.2px" width="16" height="12" viewBox="0 0 16 12"><rect x=".5" y=".5" width="14.5" height="11" rx="1.5" fill="url(#tg)" stroke="#d2b264"/><path d="M12 .8h2.2v2.2z" fill="#7ab070"/></svg>
<div class="s" style="left:57.3px;top:180.7px;color:#444">extensions</div>
<div class="ab" style="left:27.2px;top:201.6px;width:10.2px;height:1px;background:#c4c4c4"></div>
<svg style="left:37.3px;top:196.1px" width="16" height="12" viewBox="0 0 16 12"><rect x=".5" y=".5" width="14.5" height="11" rx="1.5" fill="url(#tg)" stroke="#d2b264"/><path d="M12 .8h2.2v2.2z" fill="#7ab070"/></svg>
<div class="s" style="left:57.3px;top:195.6px;color:#444">Forum</div>
<div class="ab" style="left:44.8px;top:216.5px;width:10.2px;height:1px;background:#c4c4c4"></div>
<svg style="left:55.0px;top:211.0px" width="16" height="12" viewBox="0 0 16 12"><rect x=".5" y=".5" width="14.5" height="11" rx="1.5" fill="url(#tg)" stroke="#d2b264"/><path d="M12 .8h2.2v2.2z" fill="#7ab070"/></svg>
<div class="s" style="left:75.0px;top:210.5px;color:#444">adm</div>
<div class="ab" style="left:44.8px;top:231.4px;width:10.2px;height:1px;background:#c4c4c4"></div>
<svg style="left:55.0px;top:225.9px" width="16" height="12" viewBox="0 0 16 12"><rect x=".5" y=".5" width="14.5" height="11" rx="1.5" fill="url(#tg)" stroke="#d2b264"/><path d="M12 .8h2.2v2.2z" fill="#7ab070"/></svg>
<div class="s" style="left:75.0px;top:225.4px;color:#444">cache</div>
<div class="ab" style="left:44.8px;top:246.4px;width:10.2px;height:1px;background:#c4c4c4"></div>
<svg style="left:55.0px;top:240.9px" width="16" height="12" viewBox="0 0 16 12"><rect x=".5" y=".5" width="14.5" height="11" rx="1.5" fill="url(#tg)" stroke="#d2b264"/><path d="M12 .8h2.2v2.2z" fill="#7ab070"/></svg>
<div class="s" style="left:75.0px;top:240.4px;color:#444">docs</div>
<div class="ab" style="left:44.8px;top:261.3px;width:10.2px;height:1px;background:#c4c4c4"></div>
<svg style="left:55.0px;top:255.8px" width="16" height="12" viewBox="0 0 16 12"><rect x=".5" y=".5" width="14.5" height="11" rx="1.5" fill="url(#tg)" stroke="#d2b264"/><path d="M12 .8h2.2v2.2z" fill="#7ab070"/></svg>
<div class="s" style="left:75.0px;top:255.3px;color:#444">download</div>
<div class="ab" style="left:44.8px;top:276.2px;width:10.2px;height:1px;background:#c4c4c4"></div>
<svg style="left:55.0px;top:270.7px" width="16" height="12" viewBox="0 0 16 12"><rect x=".5" y=".5" width="14.5" height="11" rx="1.5" fill="url(#tg)" stroke="#d2b264"/><path d="M12 .8h2.2v2.2z" fill="#7ab070"/></svg>
<div class="s" style="left:75.0px;top:270.2px;color:#444">files</div>
<div class="ab" style="left:44.8px;top:291.2px;width:10.2px;height:1px;background:#c4c4c4"></div>
<svg style="left:55.0px;top:285.7px" width="16" height="12" viewBox="0 0 16 12"><rect x=".5" y=".5" width="14.5" height="11" rx="1.5" fill="url(#tg)" stroke="#d2b264"/><path d="M12 .8h2.2v2.2z" fill="#7ab070"/></svg>
<div class="s" style="left:75.0px;top:285.2px;color:#444">images</div>
<div class="ab" style="left:44.8px;top:306.1px;width:10.2px;height:1px;background:#c4c4c4"></div>
<svg style="left:55.0px;top:300.6px" width="16" height="12" viewBox="0 0 16 12"><rect x=".5" y=".5" width="14.5" height="11" rx="1.5" fill="url(#tg)" stroke="#d2b264"/><path d="M12 .8h2.2v2.2z" fill="#7ab070"/></svg>
<div class="s" style="left:75.0px;top:300.1px;color:#444">includes</div>
<div class="ab" style="left:44.8px;top:321.0px;width:10.2px;height:1px;background:#c4c4c4"></div>
<svg style="left:55.0px;top:315.5px" width="16" height="12" viewBox="0 0 16 12"><rect x=".5" y=".5" width="14.5" height="11" rx="1.5" fill="url(#tg)" stroke="#d2b264"/><path d="M12 .8h2.2v2.2z" fill="#7ab070"/></svg>
<div class="s" style="left:75.0px;top:315.0px;color:#444">language</div>
<div class="ab" style="left:44.8px;top:336.0px;width:10.2px;height:1px;background:#c4c4c4"></div>
<svg style="left:55.0px;top:330.5px" width="16" height="12" viewBox="0 0 16 12"><rect x=".5" y=".5" width="14.5" height="11" rx="1.5" fill="url(#tg)" stroke="#d2b264"/><path d="M12 .8h2.2v2.2z" fill="#7ab070"/></svg>
<div class="s" style="left:75.0px;top:330.0px;color:#444">store</div>
<div class="ab" style="left:44.8px;top:350.9px;width:10.2px;height:1px;background:#c4c4c4"></div>
<svg style="left:55.0px;top:345.4px" width="16" height="12" viewBox="0 0 16 12"><rect x=".5" y=".5" width="14.5" height="11" rx="1.5" fill="url(#tg)" stroke="#d2b264"/><path d="M12 .8h2.2v2.2z" fill="#7ab070"/></svg>
<div class="s" style="left:75.0px;top:344.9px;color:#444">styles</div>
<div class="ab" style="left:27.2px;top:365.8px;width:10.2px;height:1px;background:#c4c4c4"></div>
<svg style="left:37.3px;top:360.3px" width="16" height="12" viewBox="0 0 16 12"><rect x=".5" y=".5" width="14.5" height="11" rx="1.5" fill="url(#tg)" stroke="#d2b264"/><path d="M12 .8h2.2v2.2z" fill="#7ab070"/></svg>
<div class="s" style="left:57.3px;top:359.8px;color:#444">images</div>
<div class="ab" style="left:27.2px;top:380.8px;width:10.2px;height:1px;background:#c4c4c4"></div>
<svg style="left:37.3px;top:375.2px" width="16" height="12" viewBox="0 0 16 12"><rect x=".5" y=".5" width="14.5" height="11" rx="1.5" fill="url(#tg)" stroke="#d2b264"/><path d="M12 .8h2.2v2.2z" fill="#7ab070"/></svg>
<div class="s" style="left:57.3px;top:374.8px;color:#444">info</div>
<div class="ab" style="left:27.2px;top:395.7px;width:10.2px;height:1px;background:#c4c4c4"></div>
<svg style="left:37.3px;top:390.2px" width="16" height="12" viewBox="0 0 16 12"><rect x=".5" y=".5" width="14.5" height="11" rx="1.5" fill="url(#tg)" stroke="#d2b264"/><path d="M12 .8h2.2v2.2z" fill="#7ab070"/></svg>
<div class="s" style="left:57.3px;top:389.7px;color:#444">language</div>
<div class="ab" style="left:27.2px;top:410.6px;width:10.2px;height:1px;background:#c4c4c4"></div>
<svg style="left:37.3px;top:405.1px" width="16" height="12" viewBox="0 0 16 12"><rect x=".5" y=".5" width="14.5" height="11" rx="1.5" fill="url(#tg)" stroke="#d2b264"/><path d="M12 .8h2.2v2.2z" fill="#7ab070"/></svg>
<div class="s" style="left:57.3px;top:404.6px;color:#444">padfiles</div>
<div class="ab" style="left:27.2px;top:425.5px;width:10.2px;height:1px;background:#c4c4c4"></div>
<svg style="left:37.3px;top:420.0px" width="16" height="12" viewBox="0 0 16 12"><rect x=".5" y=".5" width="14.5" height="11" rx="1.5" fill="url(#tg)" stroke="#d2b264"/><path d="M12 .8h2.2v2.2z" fill="#7ab070"/></svg>
<div class="s" style="left:57.3px;top:419.5px;color:#444">screenshots</div>
<div class="ab" style="left:27.2px;top:440.5px;width:10.2px;height:1px;background:#c4c4c4"></div>
<svg style="left:37.3px;top:435.0px" width="16" height="12" viewBox="0 0 16 12"><rect x=".5" y=".5" width="14.5" height="11" rx="1.5" fill="url(#tg)" stroke="#d2b264"/><path d="M12 .8h2.2v2.2z" fill="#7ab070"/></svg>
<div class="s" style="left:57.3px;top:434.5px;color:#444">skin</div>
<div class="ab" style="left:27.2px;top:455.4px;width:10.2px;height:1px;background:#c4c4c4"></div>
<svg style="left:37.3px;top:449.9px" width="16" height="12" viewBox="0 0 16 12"><rect x=".5" y=".5" width="14.5" height="11" rx="1.5" fill="url(#tg)" stroke="#d2b264"/><path d="M12 .8h2.2v2.2z" fill="#7ab070"/></svg>
<div class="s" style="left:57.3px;top:449.4px;color:#444">Spell</div>
<div class="ab" style="left:27.2px;top:470.3px;width:10.2px;height:1px;background:#c4c4c4"></div>
<svg style="left:37.3px;top:464.8px" width="16" height="12" viewBox="0 0 16 12"><rect x=".5" y=".5" width="14.5" height="11" rx="1.5" fill="url(#tg)" stroke="#d2b264"/><path d="M12 .8h2.2v2.2z" fill="#7ab070"/></svg>
<div class="s" style="left:57.3px;top:464.3px;color:#444">styles</div>
<div class="ab" style="left:27.2px;top:485.3px;width:10.2px;height:1px;background:#c4c4c4"></div>
<svg style="left:37.3px;top:479.8px" width="16" height="12" viewBox="0 0 16 12"><rect x=".5" y=".5" width="14.5" height="11" rx="1.5" fill="url(#tg)" stroke="#d2b264"/><path d="M12 .8h2.2v2.2z" fill="#7ab070"/></svg>
<div class="s" style="left:57.3px;top:479.3px;color:#444">syntax</div>
<div class="ab" style="left:27.2px;top:500.2px;width:10.2px;height:1px;background:#c4c4c4"></div>
<svg style="left:37.3px;top:494.7px" width="16" height="12" viewBox="0 0 16 12"><rect x=".5" y=".5" width="14.5" height="11" rx="1.5" fill="url(#tg)" stroke="#d2b264"/><path d="M12 .8h2.2v2.2z" fill="#7ab070"/></svg>
<div class="s" style="left:57.3px;top:494.2px;color:#444">t</div>
<div class="ab" style="left:27.2px;top:515.1px;width:10.2px;height:1px;background:#c4c4c4"></div>
<svg style="left:37.3px;top:509.6px" width="16" height="12" viewBox="0 0 16 12"><rect x=".5" y=".5" width="14.5" height="11" rx="1.5" fill="url(#tg)" stroke="#d2b264"/><path d="M12 .8h2.2v2.2z" fill="#7ab070"/></svg>
<div class="s" style="left:57.3px;top:509.1px;color:#444">Themes</div>
<div class="ab" style="left:9.5px;top:530.0px;width:10.2px;height:1px;background:#c4c4c4"></div>
<svg style="left:19.7px;top:524.5px" width="16" height="12" viewBox="0 0 16 12"><rect x=".5" y=".5" width="14.5" height="11" rx="1.5" fill="url(#tg)" stroke="#d2b264"/><path d="M12 .8h2.2v2.2z" fill="#7ab070"/></svg>
<div class="s" style="left:39.7px;top:524.0px;color:#444">sessions</div>
<div class="ab" style="left:9.5px;top:545.0px;width:10.2px;height:1px;background:#c4c4c4"></div>
<svg style="left:19.7px;top:539.5px" width="16" height="12" viewBox="0 0 16 12"><rect x=".5" y=".5" width="14.5" height="11" rx="1.5" fill="url(#tg)" stroke="#d2b264"/><path d="M12 .8h2.2v2.2z" fill="#7ab070"/></svg>
<div class="s" style="left:39.7px;top:539.0px;color:#444">settings</div>
<div class="ab" style="left:9.5px;top:559.9px;width:10.2px;height:1px;background:#c4c4c4"></div>
<svg style="left:19.7px;top:554.4px" width="16" height="12" viewBox="0 0 16 12"><rect x=".5" y=".5" width="14.5" height="11" rx="1.5" fill="url(#tg)" stroke="#d2b264"/><path d="M12 .8h2.2v2.2z" fill="#7ab070"/></svg>
<div class="s" style="left:39.7px;top:553.9px;color:#444">upload_tmp_dir</div>
</div>
<div class="ab" style="left:701px;top:131px;width:479px;height:567px;background:#fff;border:none;border-right:1px solid #f0f0f0;border-bottom:1px solid #f0f0f0;border-top:2px solid #cfcfcf;border-left:1px solid #e8e8e8"></div>
<div class="ab" style="left:702px;top:132px;width:463px;height:20px;background:#fcfcfc;border-bottom:1px solid #f0f0f0"></div>
<div class="ab" style="left:841px;top:132px;width:1px;height:20px;background:#e8e8e8"></div>
<div class="ab" style="left:936px;top:132px;width:1px;height:20px;background:#e8e8e8"></div>
<div class="ab" style="left:1076px;top:132px;width:1px;height:20px;background:#e8e8e8"></div>
<div class="t" style="left:707px;top:137px">Name</div>
<div class="t" style="left:848px;top:137px">Size</div>
<div class="t" style="left:941px;top:137px">Type</div>
<div class="t" style="left:1081px;top:137px">Date</div>
<div class="ab" style="left:1165px;top:132px;width:14px;height:551px;background:#f0f0f0"></div>
<div class="ab" style="left:1166px;top:148px;width:13px;height:500px;background:#cdcdcd"></div>
<svg style="left:1167px;top:138px" width="9" height="6" viewBox="0 0 9 6"><path d="M1 5l3.5-3.5 3.5 3.5" stroke="#555" stroke-width="1.4" fill="none"/></svg>
<svg style="left:1167px;top:673px" width="9" height="6" viewBox="0 0 9 6"><path d="M1 1l3.5 3.5 3.5-3.5" stroke="#555" stroke-width="1.4" fill="none"/></svg>
<div class="ab" style="left:702px;top:683px;width:478px;height:15px;background:#f0f0f0"></div>
<div class="ab" style="left:718px;top:684px;width:327px;height:12px;background:#cdcdcd"></div>
<svg style="left:706px;top:686px" width="6" height="9" viewBox="0 0 6 9"><path d="M5 1l-3.5 3.5 3.5 3.5" stroke="#555" stroke-width="1.4" fill="none"/></svg>
<svg style="left:1154px;top:686px" width="6" height="9" viewBox="0 0 6 9"><path d="M1 1l3.5 3.5-3.5 3.5" stroke="#555" stroke-width="1.4" fill="none"/></svg>
<div style="position:absolute;left:702px;top:153px;width:463px;height:528px;overflow:hidden">
<svg style="left:4px;top:3px" width="14" height="15" viewBox="0 0 14 15"><path d="M6 0l6 6h-3v3h-6v-3h-3z" fill="#6a6a6a"/><path d="M5 8h7v6h-7z" fill="#5a5a5a"/><path d="M2 9h3v4h-3z" fill="#8a8a8a"/></svg>
<div class="t" style="left:19px;top:3.00px;font-weight:bold;color:#555">..</div>
<svg style="left:1px;top:22.5px" width="16" height="13" viewBox="0 0 16 13"><path d="M1.5 2.5q0-1.5 1.5-1.5h3.5l1.5 1.5h5.5q1.5 0 1.5 1.5v7q0 1.5-1.5 1.5h-10.5q-1.5 0-1.5-1.5z" fill="#e4c420"/><path d="M1.5 11q0 1.5 1.5 1.5h10.5q1.5 0 1.5-1.5l1-4.5q0-1.5-1.5-1.5h-10.5q-1.5 0-1.5 1.5z" fill="#f6e050"/><path d="M3.5 7h10" stroke="#fbf0a0" stroke-width="1"/></svg>
<div class="t" style="left:19px;top:21.00px">adm</div>
<div class="t" style="left:236px;top:22.70px">Folder</div>
<svg style="left:1px;top:41.2px" width="16" height="13" viewBox="0 0 16 13"><path d="M1.5 2.5q0-1.5 1.5-1.5h3.5l1.5 1.5h5.5q1.5 0 1.5 1.5v7q0 1.5-1.5 1.5h-10.5q-1.5 0-1.5-1.5z" fill="#e4c420"/><path d="M1.5 11q0 1.5 1.5 1.5h10.5q1.5 0 1.5-1.5l1-4.5q0-1.5-1.5-1.5h-10.5q-1.5 0-1.5 1.5z" fill="#f6e050"/><path d="M3.5 7h10" stroke="#fbf0a0" stroke-width="1"/></svg>
<div class="t" style="left:19px;top:39.65px">cache</div>
<div class="t" style="left:236px;top:41.35px">Folder</div>
<svg style="left:1px;top:59.8px" width="16" height="13" viewBox="0 0 16 13"><path d="M1.5 2.5q0-1.5 1.5-1.5h3.5l1.5 1.5h5.5q1.5 0 1.5 1.5v7q0 1.5-1.5 1.5h-10.5q-1.5 0-1.5-1.5z" fill="#e4c420"/><path d="M1.5 11q0 1.5 1.5 1.5h10.5q1.5 0 1.5-1.5l1-4.5q0-1.5-1.5-1.5h-10.5q-1.5 0-1.5 1.5z" fill="#f6e050"/><path d="M3.5 7h10" stroke="#fbf0a0" stroke-width="1"/></svg>
<div class="t" style="left:19px;top:58.30px">docs</div>
<div class="t" style="left:236px;top:60.00px">Folder</div>
<svg style="left:1px;top:78.4px" width="16" height="13" viewBox="0 0 16 13"><path d="M1.5 2.5q0-1.5 1.5-1.5h3.5l1.5 1.5h5.5q1.5 0 1.5 1.5v7q0 1.5-1.5 1.5h-10.5q-1.5 0-1.5-1.5z" fill="#e4c420"/><path d="M1.5 11q0 1.5 1.5 1.5h10.5q1.5 0 1.5-1.5l1-4.5q0-1.5-1.5-1.5h-10.5q-1.5 0-1.5 1.5z" fill="#f6e050"/><path d="M3.5 7h10" stroke="#fbf0a0" stroke-width="1"/></svg>
<div class="t" style="left:19px;top:76.95px">download</div>
<div class="t" style="left:236px;top:78.65px">Folder</div>
<svg style="left:1px;top:97.1px" width="16" height="13" viewBox="0 0 16 13"><path d="M1.5 2.5q0-1.5 1.5-1.5h3.5l1.5 1.5h5.5q1.5 0 1.5 1.5v7q0 1.5-1.5 1.5h-10.5q-1.5 0-1.5-1.5z" fill="#e4c420"/><path d="M1.5 11q0 1.5 1.5 1.5h10.5q1.5 0 1.5-1.5l1-4.5q0-1.5-1.5-1.5h-10.5q-1.5 0-1.5 1.5z" fill="#f6e050"/><path d="M3.5 7h10" stroke="#fbf0a0" stroke-width="1"/></svg>
<div class="t" style="left:19px;top:95.60px">files</div>
<div class="t" style="left:236px;top:97.30px">Folder</div>
<svg style="left:1px;top:115.8px" width="16" height="13" viewBox="0 0 16 13"><path d="M1.5 2.5q0-1.5 1.5-1.5h3.5l1.5 1.5h5.5q1.5 0 1.5 1.5v7q0 1.5-1.5 1.5h-10.5q-1.5 0-1.5-1.5z" fill="#e4c420"/><path d="M1.5 11q0 1.5 1.5 1.5h10.5q1.5 0 1.5-1.5l1-4.5q0-1.5-1.5-1.5h-10.5q-1.5 0-1.5 1.5z" fill="#f6e050"/><path d="M3.5 7h10" stroke="#fbf0a0" stroke-width="1"/></svg>
<div class="t" style="left:19px;top:114.25px">images</div>
<div class="t" style="left:236px;top:115.95px">Folder</div>
<svg style="left:1px;top:134.4px" width="16" height="13" viewBox="0 0 16 13"><path d="M1.5 2.5q0-1.5 1.5-1.5h3.5l1.5 1.5h5.5q1.5 0 1.5 1.5v7q0 1.5-1.5 1.5h-10.5q-1.5 0-1.5-1.5z" fill="#e4c420"/><path d="M1.5 11q0 1.5 1.5 1.5h10.5q1.5 0 1.5-1.5l1-4.5q0-1.5-1.5-1.5h-10.5q-1.5 0-1.5 1.5z" fill="#f6e050"/><path d="M3.5 7h10" stroke="#fbf0a0" stroke-width="1"/></svg>
<div class="t" style="left:19px;top:132.90px">includes</div>
<div class="t" style="left:236px;top:134.60px">Folder</div>
<svg style="left:1px;top:153.0px" width="16" height="13" viewBox="0 0 16 13"><path d="M1.5 2.5q0-1.5 1.5-1.5h3.5l1.5 1.5h5.5q1.5 0 1.5 1.5v7q0 1.5-1.5 1.5h-10.5q-1.5 0-1.5-1.5z" fill="#e4c420"/><path d="M1.5 11q0 1.5 1.5 1.5h10.5q1.5 0 1.5-1.5l1-4.5q0-1.5-1.5-1.5h-10.5q-1.5 0-1.5 1.5z" fill="#f6e050"/><path d="M3.5 7h10" stroke="#fbf0a0" stroke-width="1"/></svg>
<div class="t" style="left:19px;top:151.55px">language</div>
<div class="t" style="left:236px;top:153.25px">Folder</div>
<svg style="left:1px;top:171.7px" width="16" height="13" viewBox="0 0 16 13"><path d="M1.5 2.5q0-1.5 1.5-1.5h3.5l1.5 1.5h5.5q1.5 0 1.5 1.5v7q0 1.5-1.5 1.5h-10.5q-1.5 0-1.5-1.5z" fill="#e4c420"/><path d="M1.5 11q0 1.5 1.5 1.5h10.5q1.5 0 1.5-1.5l1-4.5q0-1.5-1.5-1.5h-10.5q-1.5 0-1.5 1.5z" fill="#f6e050"/><path d="M3.5 7h10" stroke="#fbf0a0" stroke-width="1"/></svg>
<div class="t" style="left:19px;top:170.20px">store</div>
<div class="t" style="left:236px;top:171.90px">Folder</div>
<svg style="left:1px;top:190.4px" width="16" height="13" viewBox="0 0 16 13"><path d="M1.5 2.5q0-1.5 1.5-1.5h3.5l1.5 1.5h5.5q1.5 0 1.5 1.5v7q0 1.5-1.5 1.5h-10.5q-1.5 0-1.5-1.5z" fill="#e4c420"/><path d="M1.5 11q0 1.5 1.5 1.5h10.5q1.5 0 1.5-1.5l1-4.5q0-1.5-1.5-1.5h-10.5q-1.5 0-1.5 1.5z" fill="#f6e050"/><path d="M3.5 7h10" stroke="#fbf0a0" stroke-width="1"/></svg>
<div class="t" style="left:19px;top:188.85px">styles</div>
<div class="t" style="left:236px;top:190.55px">Folder</div>
<svg style="left:4px;top:208.0px" width="13" height="16" viewBox="0 0 13 16"><path d="M1.5 .5h7.5l3 3v12h-10.5z" fill="#fff" stroke="#c0c0c0"/></svg>
<div class="t" style="left:19px;top:207.50px">common.php</div>
<div class="t" style="left:141px;top:209.20px;width:80px;text-align:right">4 kB</div>
<div class="t" style="left:236px;top:209.20px">Web document</div>
<svg style="left:4px;top:226.6px" width="13" height="16" viewBox="0 0 13 16"><path d="M1.5 .5h7.5l3 3v12h-10.5z" fill="#fff" stroke="#c0c0c0"/></svg>
<div class="t" style="left:19px;top:226.15px">config.php</div>
<div class="t" style="left:141px;top:227.85px;width:80px;text-align:right">397 byte</div>
<div class="t" style="left:236px;top:227.85px">Web document</div>
<svg style="left:4px;top:245.3px" width="13" height="16" viewBox="0 0 13 16"><path d="M1.5 .5h7.5l3 3v12h-10.5z" fill="#fff" stroke="#c0c0c0"/></svg>
<div class="t" style="left:19px;top:244.80px">cron.php</div>
<div class="t" style="left:141px;top:246.50px;width:80px;text-align:right">4 kB</div>
<div class="t" style="left:236px;top:246.50px">Web document</div>
<svg style="left:4px;top:263.9px" width="13" height="16" viewBox="0 0 13 16"><path d="M1.5 .5h7.5l3 3v12h-10.5z" fill="#fff" stroke="#c0c0c0"/></svg>
<div class="t" style="left:19px;top:263.45px">faq.php</div>
<div class="t" style="left:141px;top:265.15px;width:80px;text-align:right">2 kB</div>
<div class="t" style="left:236px;top:265.15px">Web document</div>
<svg style="left:4px;top:282.6px" width="13" height="16" viewBox="0 0 13 16"><path d="M1.5 .5h7.5l3 3v12h-10.5z" fill="#fff" stroke="#c0c0c0"/></svg>
<div class="t" style="left:19px;top:282.10px">favicon.ico</div>
<div class="t" style="left:141px;top:283.80px;width:80px;text-align:right">894 byte</div>
<div class="t" style="left:236px;top:283.80px">Text document</div>
<svg style="left:4px;top:301.2px" width="13" height="16" viewBox="0 0 13 16"><path d="M1.5 .5h7.5l3 3v12h-10.5z" fill="#fff" stroke="#c0c0c0"/></svg>
<div class="t" style="left:19px;top:300.75px">feed.php</div>
<div class="t" style="left:141px;top:302.45px;width:80px;text-align:right">38 kB</div>
<div class="t" style="left:236px;top:302.45px">Web document</div>
<svg style="left:4px;top:319.9px" width="13" height="16" viewBox="0 0 13 16"><path d="M1.5 .5h7.5l3 3v12h-10.5z" fill="#fff" stroke="#c0c0c0"/></svg>
<div class="t" style="left:19px;top:319.40px">index.php</div>
<div class="t" style="left:141px;top:321.10px;width:80px;text-align:right">5 kB</div>
<div class="t" style="left:236px;top:321.10px">Web document</div>
<svg style="left:4px;top:338.5px" width="13" height="16" viewBox="0 0 13 16"><path d="M1.5 .5h7.5l3 3v12h-10.5z" fill="#fff" stroke="#c0c0c0"/></svg>
<div class="t" style="left:19px;top:338.05px">mcp.php</div>
<div class="t" style="left:141px;top:339.75px;width:80px;text-align:right">24 kB</div>
<div class="t" style="left:236px;top:339.75px">Web document</div>
<svg style="left:4px;top:357.2px" width="13" height="16" viewBox="0 0 13 16"><path d="M1.5 .5h7.5l3 3v12h-10.5z" fill="#fff" stroke="#c0c0c0"/></svg>
<div class="t" style="left:19px;top:356.70px">memberlist.php</div>
<div class="t" style="left:141px;top:358.40px;width:80px;text-align:right">61 kB</div>
<div class="t" style="left:236px;top:358.40px">Web document</div>
<svg style="left:4px;top:375.8px" width="13" height="16" viewBox="0 0 13 16"><path d="M1.5 .5h7.5l3 3v12h-10.5z" fill="#fff" stroke="#c0c0c0"/></svg>
<div class="t" style="left:19px;top:375.35px">posting.php</div>
<div class="t" style="left:141px;top:377.05px;width:80px;text-align:right">59 kB</div>
<div class="t" style="left:236px;top:377.05px">Web document</div>
<svg style="left:4px;top:394.5px" width="13" height="16" viewBox="0 0 13 16"><path d="M1.5 .5h7.5l3 3v12h-10.5z" fill="#fff" stroke="#c0c0c0"/></svg>
<div class="t" style="left:19px;top:394.00px">report.php</div>
<div class="t" style="left:141px;top:395.70px;width:80px;text-align:right">6 kB</div>
<div class="t" style="left:236px;top:395.70px">Web document</div>
<svg style="left:4px;top:413.1px" width="13" height="16" viewBox="0 0 13 16"><path d="M1.5 .5h7.5l3 3v12h-10.5z" fill="#fff" stroke="#c0c0c0"/></svg>
<div class="t" style="left:19px;top:412.65px">search.php</div>
<div class="t" style="left:141px;top:414.35px;width:80px;text-align:right">44 kB</div>
<div class="t" style="left:236px;top:414.35px">Web document</div>
<svg style="left:4px;top:431.8px" width="13" height="16" viewBox="0 0 13 16"><path d="M1.5 .5h7.5l3 3v12h-10.5z" fill="#fff" stroke="#c0c0c0"/></svg>
<div class="t" style="left:19px;top:431.30px">style.php</div>
<div class="t" style="left:141px;top:433.00px;width:80px;text-align:right">8 kB</div>
<div class="t" style="left:236px;top:433.00px">Web document</div>
<svg style="left:4px;top:450.5px" width="13" height="16" viewBox="0 0 13 16"><path d="M1.5 .5h7.5l3 3v12h-10.5z" fill="#fff" stroke="#c0c0c0"/></svg>
<div class="t" style="left:19px;top:449.95px">ucp.php</div>
<div class="t" style="left:141px;top:451.65px;width:80px;text-align:right">10 kB</div>
<div class="t" style="left:236px;top:451.65px">Web document</div>
<svg style="left:4px;top:469.1px" width="13" height="16" viewBox="0 0 13 16"><path d="M1.5 .5h7.5l3 3v12h-10.5z" fill="#fff" stroke="#c0c0c0"/></svg>
<div class="t" style="left:19px;top:468.60px">web.config</div>
<div class="t" style="left:141px;top:470.30px;width:80px;text-align:right">625 byte</div>
<div class="t" style="left:236px;top:470.30px">Text document</div>
<svg style="left:4px;top:487.8px" width="13" height="16" viewBox="0 0 13 16"><path d="M1.5 .5h7.5l3 3v12h-10.5z" fill="#fff" stroke="#c0c0c0"/></svg>
<div class="t" style="left:19px;top:487.25px">viewforum.php</div>
<div class="t" style="left:141px;top:488.95px;width:80px;text-align:right">29 kB</div>
<div class="t" style="left:236px;top:488.95px">Web document</div>
<svg style="left:4px;top:506.4px" width="13" height="16" viewBox="0 0 13 16"><path d="M1.5 .5h7.5l3 3v12h-10.5z" fill="#fff" stroke="#c0c0c0"/></svg>
<div class="t" style="left:19px;top:505.90px">viewonline.php</div>
<div class="t" style="left:141px;top:507.60px;width:80px;text-align:right">14 kB</div>
<div class="t" style="left:236px;top:507.60px">Web document</div>
<svg style="left:4px;top:525.0px" width="13" height="16" viewBox="0 0 13 16"><path d="M1.5 .5h7.5l3 3v12h-10.5z" fill="#fff" stroke="#c0c0c0"/></svg>
<div class="t" style="left:19px;top:524.55px">viewtopic.php</div>
<div class="t" style="left:141px;top:526.25px;width:80px;text-align:right">32 kB</div>
<div class="t" style="left:236px;top:526.25px">Web document</div>
</div>
<div class="ab" style="left:41px;top:698px;width:2px;height:18px;background:#d0d0d0"></div>
<div class="t" style="left:202px;top:699.5px;font-size:13px;line-height:15px">Files: 0 (0) ,&nbsp;&nbsp; Folders: 0 (0)</div>
<div class="ab" style="left:545px;top:698px;width:635px;height:15px;background:#efebe6"></div>
<div class="t" style="left:775px;top:699.5px;font-size:13px;line-height:15px">Files: 19 (0) ,&nbsp;&nbsp; Folders: 10 (0)</div>
<div class="ab" style="left:42px;top:718px;width:2px;height:20px;background:#d0d0d0"></div>
<div class="t" style="left:44.0px;top:720px;width:189.6px;text-align:center;font-size:14.2px;line-height:16px;color:#333">Edit file</div>
<div class="t" style="left:233.6px;top:720px;width:189.6px;text-align:center;font-size:14.2px;line-height:16px;color:#333">Copy files</div>
<div class="ab" style="left:232.6px;top:718px;width:2px;height:20px;background:#d4d4d4"></div>
<div class="t" style="left:423.2px;top:720px;width:189.6px;text-align:center;font-size:14.2px;line-height:16px;color:#333">Move files</div>
<div class="ab" style="left:422.2px;top:718px;width:2px;height:20px;background:#d4d4d4"></div>
<div class="t" style="left:612.8px;top:720px;width:189.6px;text-align:center;font-size:14.2px;line-height:16px;color:#333">Delete</div>
<div class="ab" style="left:611.8px;top:718px;width:2px;height:20px;background:#d4d4d4"></div>
<div class="t" style="left:802.4px;top:720px;width:189.6px;text-align:center;font-size:14.2px;line-height:16px;color:#333">Compress</div>
<div class="ab" style="left:801.4px;top:718px;width:2px;height:20px;background:#d4d4d4"></div>
<div class="t" style="left:992.0px;top:720px;width:189.6px;text-align:center;font-size:14.2px;line-height:16px;color:#333">Extract</div>
<div class="ab" style="left:991.0px;top:718px;width:2px;height:20px;background:#d4d4d4"></div>
<svg style="left:46px;top:746px" width="17" height="16" viewBox="0 0 17 16"><path d="M8.5 1l-8 7h2.5v6h11v-6h2.5z" fill="#d88a40"/><rect x="6" y="9" width="5" height="5" fill="#fff"/><path d="M1 15h15" stroke="#40a040" stroke-width="2"/></svg>
<svg style="left:119px;top:746px" width="16" height="17" viewBox="0 0 16 17"><path d="M1.5 .5h9l3 3v12h-12z" fill="#e8f0f8" stroke="#8aa0c0"/><path d="M6 13l8-8" stroke="#e8a020" stroke-width="2"/></svg>
<svg style="left:190px;top:746px" width="16" height="16" viewBox="0 0 16 16"><circle cx="8" cy="8" r="6.5" fill="none" stroke="#3a88d8" stroke-width="3"/><path d="M2 9h12" stroke="#3a88d8" stroke-width="2"/><path d="M1 15l14-12" stroke="#f0c020" stroke-width="1.5"/></svg>
<div class="ab" style="left:265px;top:742px;width:137px;height:25px;background:#f0f0f0;border:1px solid #d8d8d8;border-top:none"></div>
<svg style="left:270px;top:747px" width="15" height="15" viewBox="0 0 15 15"><rect x=".5" y=".5" width="14" height="14" fill="#d8f0c8" stroke="#6aa048"/><path d="M3 5h9M3 9h9" stroke="#6aa048"/></svg>
<div class="t" style="left:65.5px;top:747px;font-size:14px;line-height:16px;color:#333">Home</div>
<div class="t" style="left:138px;top:747px;font-size:14px;line-height:16px;color:#333">Editor</div>
<div class="t" style="left:208.5px;top:747px;font-size:14px;line-height:16px;color:#333">Preview</div>
<div class="t" style="left:289.5px;top:747px;font-size:14px;line-height:16px;color:#333">File Commander</div>
<div class="ab" style="left:111px;top:744px;width:1px;height:22px;background:#d4d4d4"></div>
<div class="ab" style="left:182px;top:744px;width:1px;height:22px;background:#d4d4d4"></div>
<div class="ab" style="left:262px;top:744px;width:1px;height:22px;background:#d4d4d4"></div>
<div class="ab" style="left:8px;top:773px;width:1205px;height:19px;background:#f0f0f0;border-top:1px solid #e2e2e2"></div>
<svg style="left:1200px;top:781px" width="11" height="11" viewBox="0 0 11 11"><path d="M10 2v8h-8z" fill="none"/><circle cx="9" cy="3" r=".8" fill="#bbb"/><circle cx="9" cy="6" r=".8" fill="#bbb"/><circle cx="9" cy="9" r=".8" fill="#bbb"/><circle cx="6" cy="6" r=".8" fill="#bbb"/><circle cx="6" cy="9" r=".8" fill="#bbb"/><circle cx="3" cy="9" r=".8" fill="#bbb"/></svg>
<div class="t" style="left:10px;top:776.5px;font-size:14.2px;line-height:16px;color:#333">Done</div>
</div></body></html>
